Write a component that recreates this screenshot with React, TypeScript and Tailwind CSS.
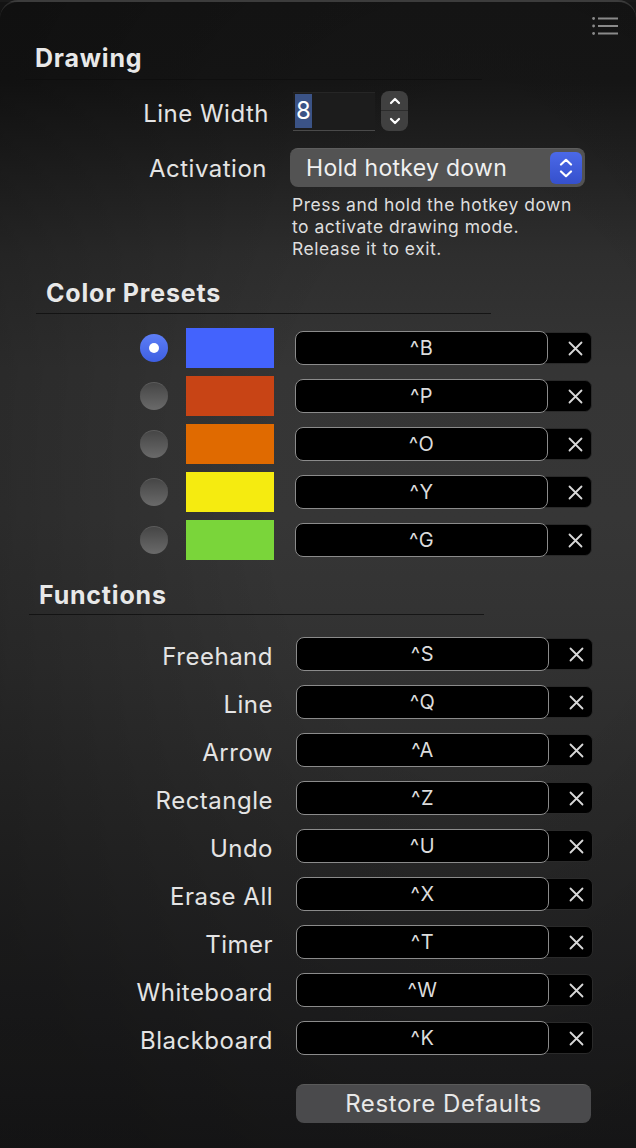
import React from "react";

const colorRows = [
  { color: "#4363fd", key: "^B", selected: true },
  { color: "#c84415", key: "^P" },
  { color: "#e06a00", key: "^O" },
  { color: "#f5eb10", key: "^Y" },
  { color: "#7ad53a", key: "^G" },
];

const fnRows = [
  ["Freehand", "^S"],
  ["Line", "^Q"],
  ["Arrow", "^A"],
  ["Rectangle", "^Z"],
  ["Undo", "^U"],
  ["Erase All", "^X"],
  ["Timer", "^T"],
  ["Whiteboard", "^W"],
  ["Blackboard", "^K"],
];

function XIcon() {
  return (
    <svg width="15" height="15" viewBox="0 0 15 15" fill="none">
      <path d="M1.5 1.5L13.5 13.5M13.5 1.5L1.5 13.5" stroke="#d8d8d8" strokeWidth="1.8" strokeLinecap="round" />
    </svg>
  );
}

function Shortcut({ k }: { k: string }) {
  return (
    <div className="flex h-[32px] w-[297px] items-center rounded-[7px] border border-[#2a2a2a] bg-black">
      <div className="-my-px -ml-px flex h-[34px] w-[253px] items-center justify-center rounded-[8px] border-[1.5px] border-[#8b8b8b] bg-black text-[20px] leading-none tracking-[0.5px] text-[#dcdcdc]">
        {k}
      </div>
      <div className="flex flex-1 items-center justify-end pr-[8px]">
        <XIcon />
      </div>
    </div>
  );
}

function Radio({ selected }: { selected?: boolean }) {
  if (selected) {
    return (
      <div className="flex h-[28px] w-[28px] items-center justify-center rounded-full bg-[linear-gradient(180deg,#5d7ef6,#3e5fe2)]">
        <div className="h-[10px] w-[10px] rounded-full bg-white" />
      </div>
    );
  }
  return (
    <div className="h-[28px] w-[28px] rounded-full border-t border-[#5c5c5c] bg-[linear-gradient(180deg,#464646,#6a6a6a)]" />
  );
}

function Separator({ left, right }: { left: number; right: number }) {
  return (
    <div
      className="h-px bg-[#0e0e0e]/80"
      style={{ marginLeft: left, width: right - left }}
    />
  );
}

export default function App() {
  return (
    <div className="h-[1148px] w-[636px] overflow-hidden bg-[#1a1a1a] font-[Inter,'Noto_Sans',sans-serif] text-[#e4e4e4]">
      <div className="relative h-full w-full rounded-t-[18px] border-t-2 border-[#3c3c3c] bg-[linear-gradient(180deg,#161616_0%,#171717_7%,#222222_14%,#2e2e2e_22%,#353535_32%,#363636_45%,#313131_58%,#292929_72%,#212122_86%,#1b1b1c_100%)]">
        <div className="absolute inset-0 bg-[radial-gradient(ellipse_at_75%_42%,rgba(0,0,0,0)_30%,rgba(0,0,0,0.28)_85%)]" />
        <div className="relative flex flex-col">
          {/* toolbar icon */}
          <div className="flex justify-end pr-[17px] pt-[15px]">
            <svg width="27" height="18" viewBox="0 0 27 18" fill="none">
              <circle cx="1.6" cy="1.5" r="1.4" fill="#8a8a8a" />
              <circle cx="1.6" cy="9" r="1.4" fill="#8a8a8a" />
              <circle cx="1.6" cy="16.5" r="1.4" fill="#8a8a8a" />
              <path d="M6 1.5H26M6 9H26M6 16.5H26" stroke="#8a8a8a" strokeWidth="1.8" />
            </svg>
          </div>

          {/* Drawing */}
          <div className="mt-[9px] pl-[35px] text-[25px] font-bold leading-[28px] tracking-[0.8px] text-[#e8e8e8]">Drawing</div>
          <div className="mt-[7px]">
            <Separator left={25} right={482} />
          </div>

          <div className="mt-[11px] flex items-center">
            <div className="w-[269px] pt-[6px] text-right text-[24px] leading-[28px] tracking-[0.5px]">Line Width</div>
            <div className="ml-[24px] flex h-[39px] w-[82px] items-center border-b border-t border-b-[#4a4a4a] border-t-[#262626] bg-[#1c1c1c] pl-[2px]">
              <span className="bg-[#3b5386] px-[1px] text-[24px] leading-[34px] text-white">8</span>
            </div>
            <div className="ml-[6px] flex h-[40px] w-[27px] flex-col items-center rounded-[8px] bg-[#404040]">
              <div className="flex h-1/2 w-full items-center justify-center border-b border-[#2c2c2c]">
                <svg width="12" height="8" viewBox="0 0 12 8" fill="none">
                  <path d="M2 6L6 2L10 6" stroke="white" strokeWidth="2.2" strokeLinecap="round" strokeLinejoin="round" />
                </svg>
              </div>
              <div className="flex h-1/2 w-full items-center justify-center">
                <svg width="12" height="8" viewBox="0 0 12 8" fill="none">
                  <path d="M2 2L6 6L10 2" stroke="white" strokeWidth="2.2" strokeLinecap="round" strokeLinejoin="round" />
                </svg>
              </div>
            </div>
          </div>

          <div className="mt-[17px] flex items-center">
            <div className="w-[267px] pt-[2px] text-right text-[24px] leading-[28px] tracking-[0.5px]">Activation</div>
            <div className="ml-[23px] flex h-[39px] w-[295px] items-center justify-between rounded-[8px] border-t border-[#5e5e5e] bg-[#535353] pl-[16px] pr-[3px]">
              <span className="text-[23px] leading-[28px] tracking-[0.3px] text-[#f0f0f0]">Hold hotkey down</span>
              <div className="flex h-[32px] w-[32px] flex-col items-center justify-center gap-[4px] rounded-[6px] bg-[linear-gradient(180deg,#4b69e8,#3550cc)]">
                <svg width="14" height="8" viewBox="0 0 14 8" fill="none">
                  <path d="M2 6.5L7 1.8L12 6.5" stroke="white" strokeWidth="2.2" strokeLinecap="round" strokeLinejoin="round" />
                </svg>
                <svg width="14" height="8" viewBox="0 0 14 8" fill="none">
                  <path d="M2 1.5L7 6.2L12 1.5" stroke="white" strokeWidth="2.2" strokeLinecap="round" strokeLinejoin="round" />
                </svg>
              </div>
            </div>
          </div>

          <div className="ml-[292px] mt-[7px] text-[17.5px] leading-[22px] tracking-[0.5px] text-[#dedede]">
            <div>Press and hold the hotkey down</div>
            <div>to activate drawing mode.</div>
            <div>Release it to exit.</div>
          </div>

          {/* Color Presets */}
          <div className="mt-[19px] pl-[46px] text-[25px] font-bold leading-[28px] tracking-[0.8px] text-[#e8e8e8]">Color Presets</div>
          <div className="mt-[6px]">
            <Separator left={36} right={491} />
          </div>

          <div className="mt-[14px] flex flex-col gap-[8px]">
            {colorRows.map((r) => (
              <div key={r.key} className="flex h-[40px] items-center pl-[140px]">
                <Radio selected={r.selected} />
                <div className="ml-[18px] h-[40px] w-[88px]" style={{ backgroundColor: r.color }} />
                <div className="ml-[21px]">
                  <Shortcut k={r.key} />
                </div>
              </div>
            ))}
          </div>

          {/* Functions */}
          <div className="mt-[21px] pl-[39px] text-[25px] font-bold leading-[28px] tracking-[0.8px] text-[#e8e8e8]">Functions</div>
          <div className="mt-[5px]">
            <Separator left={29} right={484} />
          </div>

          <div className="mt-[19px] flex flex-col gap-[8px]">
            {fnRows.map(([label, k]) => (
              <div key={label} className="flex h-[40px] items-center">
                <div className="w-[273px] pt-[6px] text-right text-[24px] leading-[28px] tracking-[0.5px]">{label}</div>
                <div className="ml-[23px]">
                  <Shortcut k={k} />
                </div>
              </div>
            ))}
          </div>

          <div className="ml-[296px] mt-[26px] flex h-[39px] w-[295px] items-center justify-center rounded-[8px] border-t border-[#5a5a5a] bg-[#4a4a4c] text-[24px] leading-[28px] tracking-[0.6px] text-[#e8e8e8]">
            Restore Defaults
          </div>
        </div>
      </div>
    </div>
  );
}
